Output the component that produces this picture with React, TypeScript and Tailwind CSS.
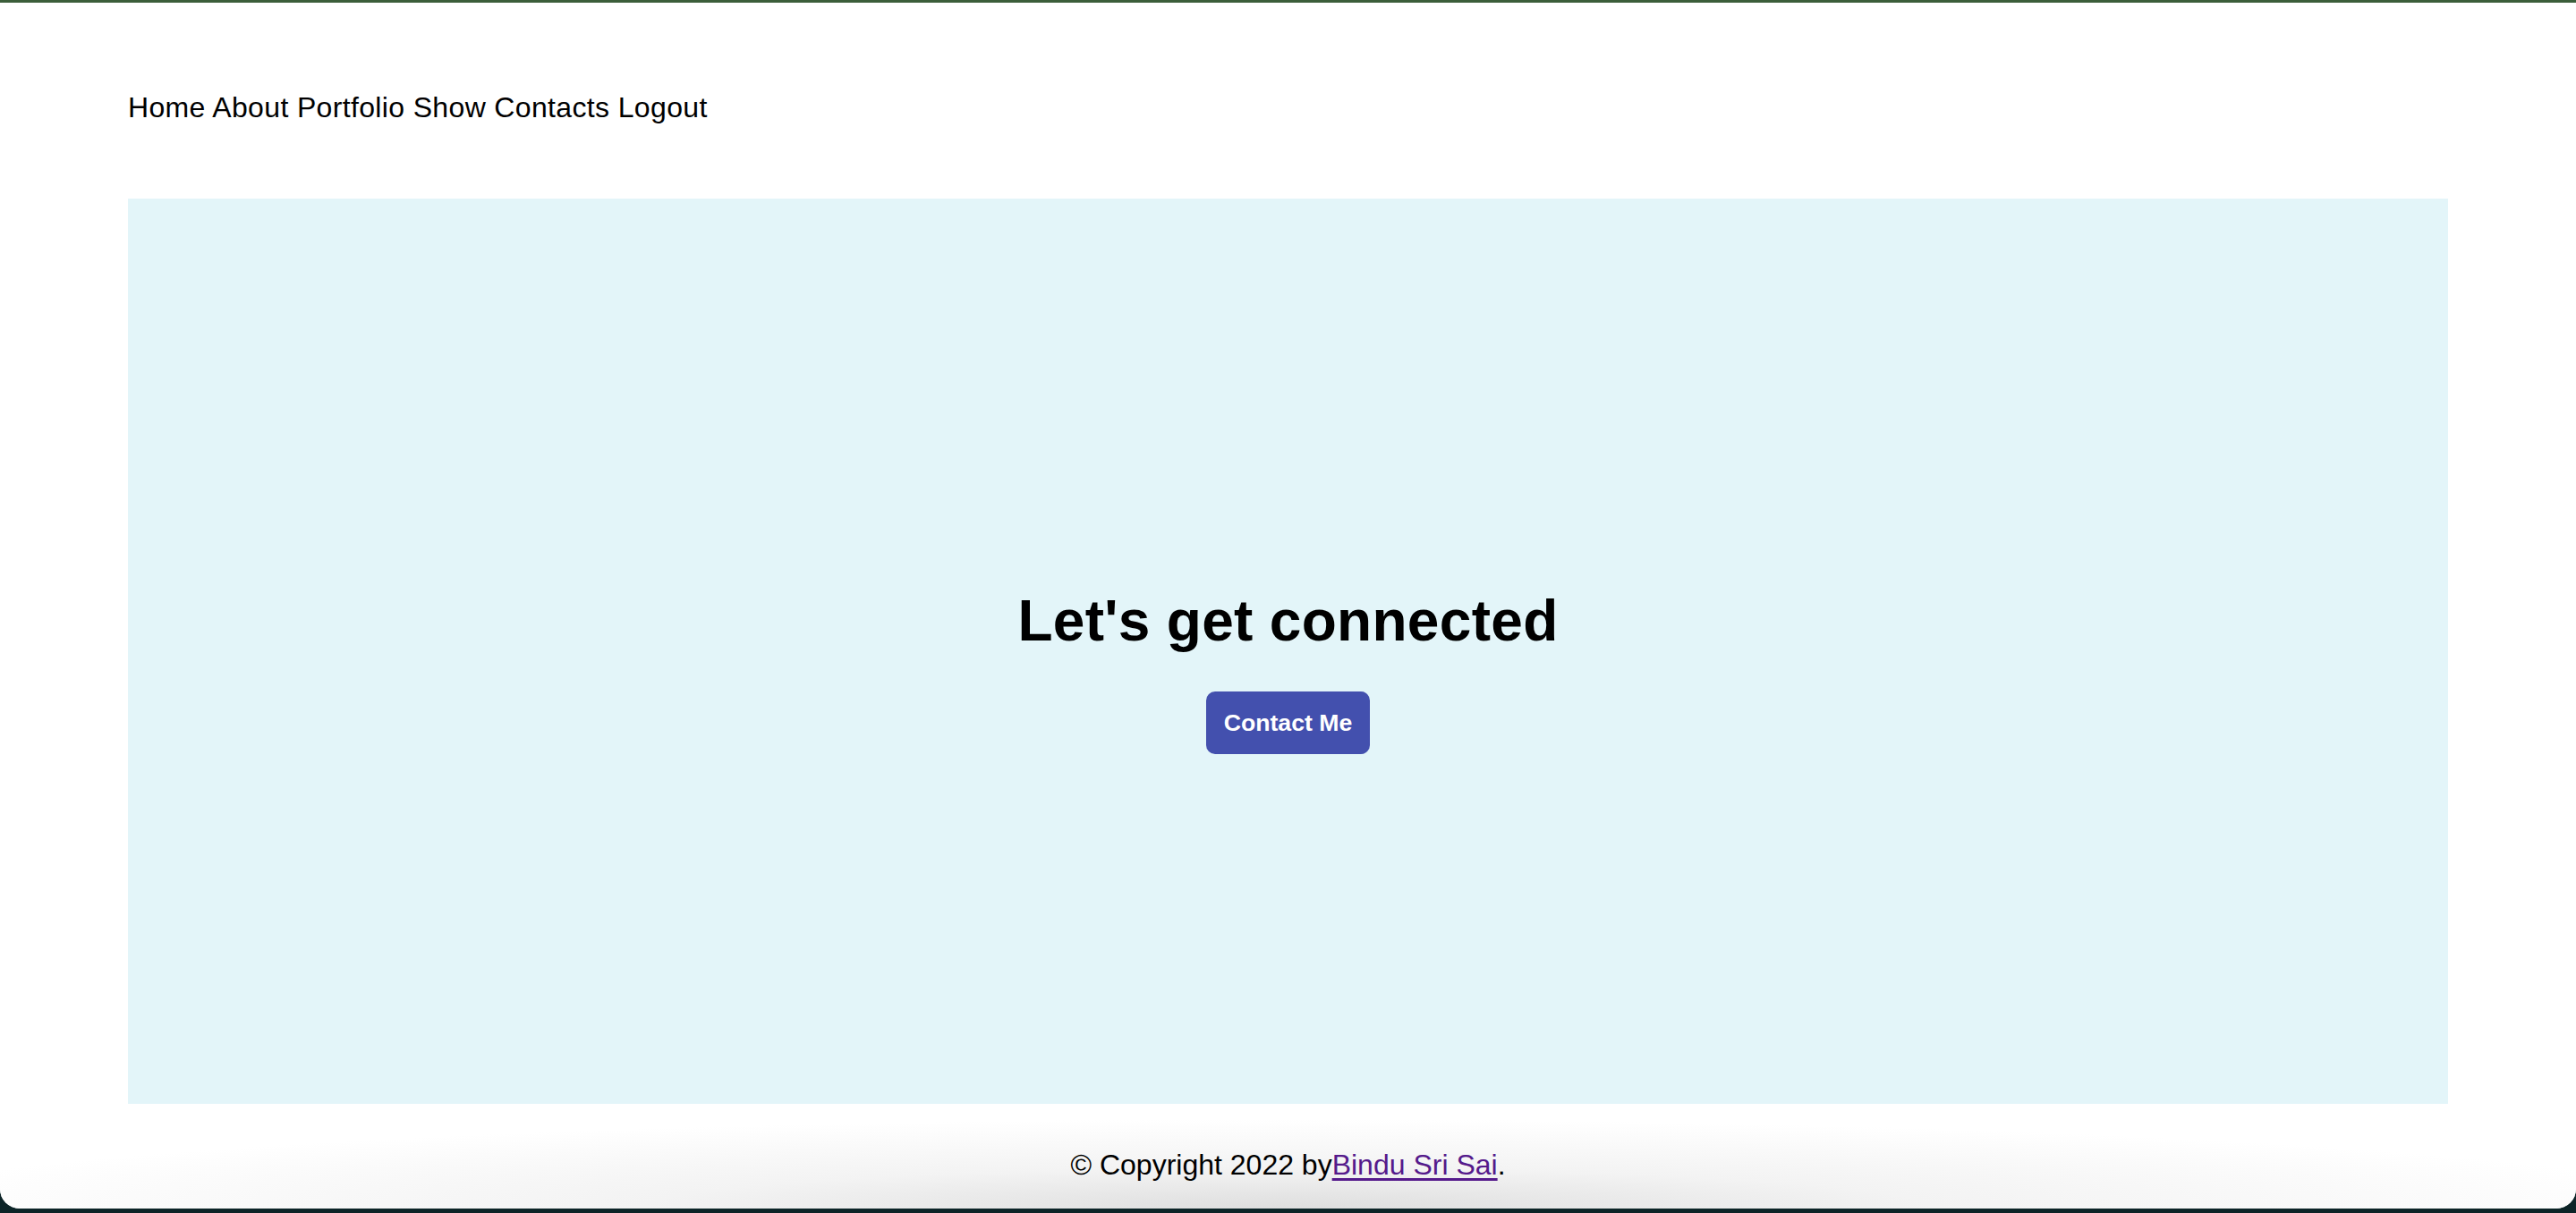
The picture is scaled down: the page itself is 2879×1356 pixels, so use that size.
import React from "react";

export default function App() {
  const navItems = ["Home", "About", "Portfolio", "Show Contacts", "Logout"];
  return (
    <div
      className="w-full h-[1356px] bg-[#0c2427] flex flex-col overflow-hidden"
      style={{ fontFamily: '"Liberation Sans", Arial, Helvetica, sans-serif' }}
    >
      <div className="h-[3px] w-full bg-[#3b5e3a] shrink-0" />
      <div className="h-[1348px] w-full bg-white rounded-b-[22px] flex flex-col overflow-hidden shrink-0">
        <nav className="px-[143px] pt-[99px] text-[32px] leading-[1.15] tracking-[0.35px] text-black">
          {navItems.map((item, i) => (
            <React.Fragment key={item}>
              <a className="text-black no-underline">{item}</a>
              {i < navItems.length - 1 ? " " : ""}
            </React.Fragment>
          ))}
        </nav>
        <div className="px-[143px] pt-[83px]">
          <section className="h-[1012px] bg-[#e3f5f9] flex flex-col items-center pt-[436px]">
            <h1 className="text-[64px] font-bold leading-[1.15] tracking-[0.3px] text-black">Let's get connected</h1>
            <button className="mt-[42px] h-[70px] px-[20px] rounded-[10px] bg-[#4350ae] text-white font-bold text-[26.67px] leading-none">
              Contact Me
            </button>
          </section>
        </div>
        <footer className="flex-1 flex justify-center pt-[50px] text-[32px] leading-[1.15] text-black bg-[radial-gradient(ellipse_1600px_100px_at_50%_100%,#dedede_0%,#f3f3f3_45%,#ffffff_100%)]">
          <p>
            © Copyright 2022 by<a className="text-[#551a8b] underline decoration-[3px] underline-offset-[4px]">Bindu Sri Sai</a>.
          </p>
        </footer>
      </div>
    </div>
  );
}
